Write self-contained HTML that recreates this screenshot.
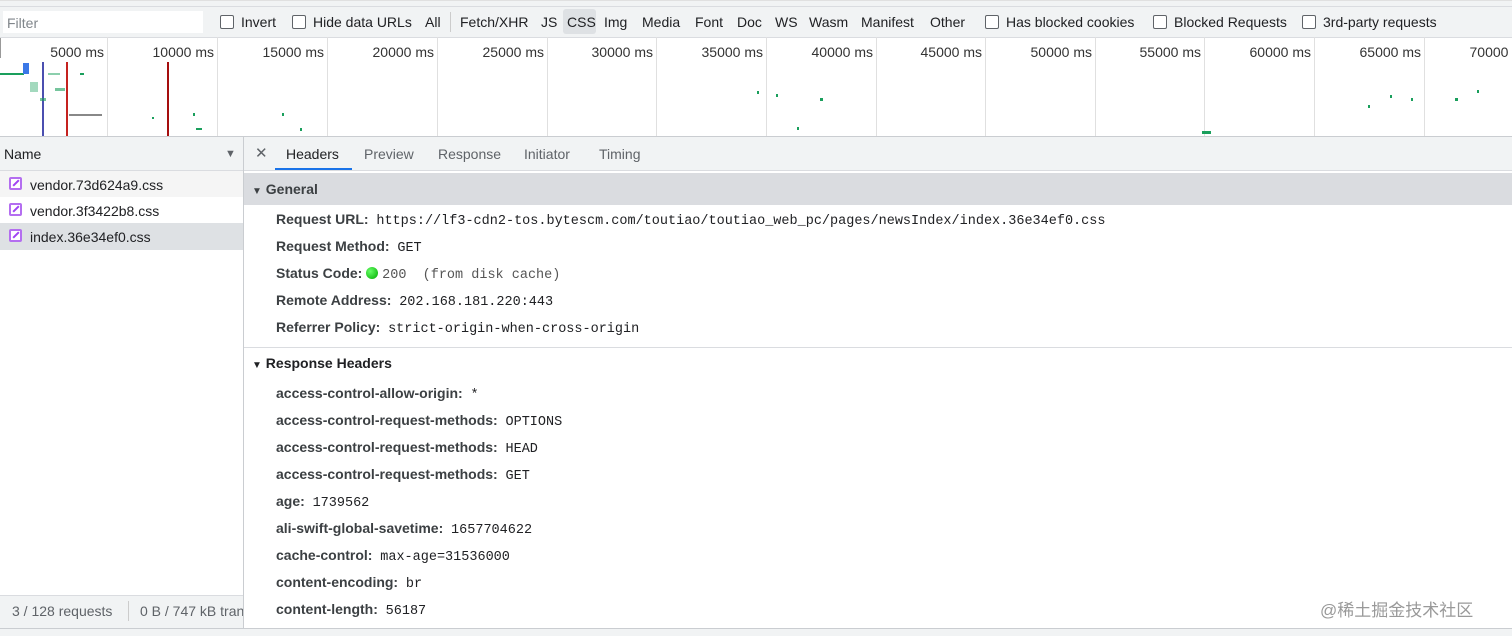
<!DOCTYPE html><html><head><meta charset="utf-8"><style>
*{margin:0;padding:0;box-sizing:border-box}
body{width:1512px;height:636px;overflow:hidden;background:#fff;font-family:"Liberation Sans","Noto Sans CJK SC",sans-serif;font-size:14px;color:#202124;position:relative}
.a{position:absolute;white-space:nowrap}
.cb{display:inline-block;width:14px;height:14px;border:1px solid #5f6368;border-radius:2px;vertical-align:-2px;margin-right:7px;background:#fff}
.mono{font-family:"Liberation Mono",monospace;font-size:13.5px}
.k{font-weight:bold;color:#3c4043;font-size:14px}
.tl{position:absolute;top:37px;height:99px;width:1px;background:#e0e0e0}
.lb{position:absolute;top:44px;font-size:14px;color:#333;text-align:right;width:100px}
.d{position:absolute;background:#1a9f5c}
.ic{position:absolute;left:9px;width:13px;height:13px;border:2px solid #b46ef0;border-radius:2px;background:#fff}
.ic:after{content:"";position:absolute;left:1px;top:3px;width:8px;height:2px;background:#a142f4;transform:rotate(-45deg)}
</style></head><body>
<div class="a" style="left:0;top:0;width:1512px;height:37px;background:#f1f3f4;border-top:1px solid #e0e0e0"></div>
<div class="a" style="left:0;top:6px;width:1512px;height:1px;background:#dadce0"></div>
<div class="a" style="left:3px;top:11px;width:200px;height:22px;background:#fff;color:#80868b;padding:4px 4px;font-size:14px">Filter</div>
<div class="a" style="left:220px;top:14px"><span class="cb"></span>Invert</div>
<div class="a" style="left:292px;top:14px"><span class="cb"></span>Hide data URLs</div>
<div class="a" style="left:425px;top:14px">All</div>
<div class="a" style="left:450px;top:12px;width:1px;height:20px;background:#ccc"></div>
<div class="a" style="left:460px;top:14px">Fetch/XHR</div>
<div class="a" style="left:541px;top:14px">JS</div>
<div class="a" style="left:563px;top:9px;width:33px;height:25px;background:#dee1e4;border-radius:3px"></div>
<div class="a" style="left:567px;top:14px">CSS</div>
<div class="a" style="left:604px;top:14px">Img</div>
<div class="a" style="left:642px;top:14px">Media</div>
<div class="a" style="left:695px;top:14px">Font</div>
<div class="a" style="left:737px;top:14px">Doc</div>
<div class="a" style="left:775px;top:14px">WS</div>
<div class="a" style="left:809px;top:14px">Wasm</div>
<div class="a" style="left:861px;top:14px">Manifest</div>
<div class="a" style="left:930px;top:14px">Other</div>
<div class="a" style="left:985px;top:14px"><span class="cb"></span>Has blocked cookies</div>
<div class="a" style="left:1153px;top:14px"><span class="cb"></span>Blocked Requests</div>
<div class="a" style="left:1302px;top:14px"><span class="cb"></span>3rd-party requests</div>
<div class="a" style="left:0;top:37px;width:1512px;height:1px;background:#dadce0"></div>
<div class="a" style="left:0;top:38px;width:1px;height:20px;background:#999"></div>
<div class="tl" style="left:107px"></div><div class="tl" style="left:217px"></div><div class="tl" style="left:327px"></div><div class="tl" style="left:437px"></div><div class="tl" style="left:547px"></div><div class="tl" style="left:656px"></div><div class="tl" style="left:766px"></div><div class="tl" style="left:876px"></div><div class="tl" style="left:985px"></div><div class="tl" style="left:1095px"></div><div class="tl" style="left:1204px"></div><div class="tl" style="left:1314px"></div><div class="tl" style="left:1424px"></div>
<div class="lb" style="left:4px">5000 ms</div><div class="lb" style="left:114px">10000 ms</div><div class="lb" style="left:224px">15000 ms</div><div class="lb" style="left:334px">20000 ms</div><div class="lb" style="left:444px">25000 ms</div><div class="lb" style="left:553px">30000 ms</div><div class="lb" style="left:663px">35000 ms</div><div class="lb" style="left:773px">40000 ms</div><div class="lb" style="left:882px">45000 ms</div><div class="lb" style="left:992px">50000 ms</div><div class="lb" style="left:1101px">55000 ms</div><div class="lb" style="left:1211px">60000 ms</div><div class="lb" style="left:1321px">65000 ms</div><div class="lb" style="left:1431px">70000 ms</div>
<div class="a" style="left:0;top:73px;width:24px;height:2px;background:#1a9f5c"></div>
<div class="a" style="left:23px;top:63px;width:6px;height:11px;background:#3b78e7"></div>
<div class="a" style="left:42px;top:62px;width:2px;height:74px;background:#4b4fb0"></div>
<div class="a" style="left:66px;top:62px;width:2px;height:74px;background:#c5221f"></div>
<div class="a" style="left:167px;top:62px;width:2px;height:74px;background:#a50e0e"></div>
<div class="a" style="left:69px;top:114px;width:33px;height:2px;background:#888"></div>
<div class="d" style="left:80px;top:73px;width:4px;height:2px"></div><div class="d" style="left:48px;top:73px;width:12px;height:2px;opacity:.5"></div>
<div class="d" style="left:30px;top:82px;width:8px;height:10px;opacity:.4"></div><div class="d" style="left:55px;top:88px;width:10px;height:3px;opacity:.6"></div><div class="d" style="left:40px;top:98px;width:6px;height:3px;opacity:.6"></div>
<div class="d" style="left:152px;top:117px;width:2px;height:2px"></div><div class="d" style="left:196px;top:128px;width:6px;height:2px"></div><div class="d" style="left:193px;top:113px;width:2px;height:3px"></div><div class="d" style="left:282px;top:113px;width:2px;height:3px"></div><div class="d" style="left:300px;top:128px;width:2px;height:3px"></div>
<div class="d" style="left:757px;top:91px;width:2px;height:3px"></div><div class="d" style="left:776px;top:94px;width:2px;height:3px"></div><div class="d" style="left:820px;top:98px;width:3px;height:3px"></div><div class="d" style="left:797px;top:127px;width:2px;height:3px"></div><div class="d" style="left:1202px;top:131px;width:9px;height:3px"></div><div class="d" style="left:1368px;top:105px;width:2px;height:3px"></div><div class="d" style="left:1390px;top:95px;width:2px;height:3px"></div><div class="d" style="left:1411px;top:98px;width:2px;height:3px"></div><div class="d" style="left:1455px;top:98px;width:3px;height:3px"></div><div class="d" style="left:1477px;top:90px;width:2px;height:3px"></div>
<div class="a" style="left:0;top:136px;width:1512px;height:1px;background:#cacdd1"></div>
<div class="a" style="left:0;top:137px;width:243px;height:34px;background:#f1f3f4;border-bottom:1px solid #dadce0"></div>
<div class="a" style="left:4px;top:146px">Name</div>
<div class="a" style="left:225px;top:148px;font-size:11px;color:#5f6368">▼</div>
<div class="a" style="left:0;top:171px;width:243px;height:26px;background:#f5f5f5"></div>
<div class="a" style="left:0;top:223px;width:243px;height:27px;background:#dee1e4"></div>
<div class="ic" style="top:177px"></div>
<div class="ic" style="top:203px"></div>
<div class="ic" style="top:229px"></div>
<div class="a" style="left:30px;top:177px">vendor.73d624a9.css</div>
<div class="a" style="left:30px;top:203px">vendor.3f3422b8.css</div>
<div class="a" style="left:30px;top:229px">index.36e34ef0.css</div>
<div class="a" style="left:0;top:595px;width:243px;height:1px;background:#dadce0"></div>
<div class="a" style="left:0;top:596px;width:243px;height:32px;background:#f1f3f4"></div>
<div class="a" style="left:12px;top:603px;color:#5f6368">3 / 128 requests</div>
<div class="a" style="left:128px;top:601px;width:1px;height:20px;background:#ccc"></div>
<div class="a" style="left:140px;top:603px;color:#5f6368;width:103px;overflow:hidden">0 B / 747 kB transferred</div>
<div class="a" style="left:243px;top:137px;width:1px;height:491px;background:#cacdd1"></div>
<div class="a" style="left:244px;top:137px;width:1268px;height:34px;background:#f1f3f4;border-bottom:1px solid #dadce0"></div>
<div class="a" style="left:255px;top:144px;font-size:15px;color:#5f6368">✕</div>
<div class="a" style="left:286px;top:146px">Headers</div>
<div class="a" style="left:275px;top:168px;width:77px;height:2px;background:#1a73e8"></div>
<div class="a" style="left:364px;top:146px;color:#5f6368">Preview</div>
<div class="a" style="left:438px;top:146px;color:#5f6368">Response</div>
<div class="a" style="left:524px;top:146px;color:#5f6368">Initiator</div>
<div class="a" style="left:599px;top:146px;color:#5f6368">Timing</div>
<div class="a" style="left:244px;top:173px;width:1268px;height:32px;background:#dadce0"></div>
<div class="a k" style="left:252px;top:181px"><span style="font-size:10px">▼</span> General</div>
<div class="a" style="left:276px;top:211px"><span class="k">Request URL:</span>&nbsp; <span class="mono">https://lf3-cdn2-tos.bytescm.com/toutiao/toutiao_web_pc/pages/newsIndex/index.36e34ef0.css</span></div>
<div class="a" style="left:276px;top:238px"><span class="k">Request Method:</span>&nbsp; <span class="mono">GET</span></div>
<div class="a" style="left:276px;top:265px"><span class="k">Status Code:</span>&nbsp;<span style="display:inline-block;width:12px;height:12px;border-radius:50%;background:radial-gradient(circle at 35% 35%,#6f6,#0a0);vertical-align:-1px"></span> <span class="mono" style="color:#555">200&nbsp; (from disk cache)</span></div>
<div class="a" style="left:276px;top:292px"><span class="k">Remote Address:</span>&nbsp; <span class="mono">202.168.181.220:443</span></div>
<div class="a" style="left:276px;top:319px"><span class="k">Referrer Policy:</span>&nbsp; <span class="mono">strict-origin-when-cross-origin</span></div>
<div class="a" style="left:244px;top:347px;width:1268px;height:1px;background:#dadce0"></div>
<div class="a k" style="left:252px;top:355px;color:#202124"><span style="font-size:10px">▼</span> Response Headers</div>
<div class="a" style="left:276px;top:385px"><span class="k">access-control-allow-origin:</span>&nbsp; <span class="mono">*</span></div>
<div class="a" style="left:276px;top:412px"><span class="k">access-control-request-methods:</span>&nbsp; <span class="mono">OPTIONS</span></div>
<div class="a" style="left:276px;top:439px"><span class="k">access-control-request-methods:</span>&nbsp; <span class="mono">HEAD</span></div>
<div class="a" style="left:276px;top:466px"><span class="k">access-control-request-methods:</span>&nbsp; <span class="mono">GET</span></div>
<div class="a" style="left:276px;top:493px"><span class="k">age:</span>&nbsp; <span class="mono">1739562</span></div>
<div class="a" style="left:276px;top:520px"><span class="k">ali-swift-global-savetime:</span>&nbsp; <span class="mono">1657704622</span></div>
<div class="a" style="left:276px;top:547px"><span class="k">cache-control:</span>&nbsp; <span class="mono">max-age=31536000</span></div>
<div class="a" style="left:276px;top:574px"><span class="k">content-encoding:</span>&nbsp; <span class="mono">br</span></div>
<div class="a" style="left:276px;top:601px"><span class="k">content-length:</span>&nbsp; <span class="mono">56187</span></div>
<div class="a" style="left:1320px;top:596px;font-size:17px;color:#999">@稀土掘金技术社区</div>
<div class="a" style="left:0;top:628px;width:1512px;height:8px;background:#f1f3f4;border-top:1px solid #cacdd1"></div>
</body></html>
